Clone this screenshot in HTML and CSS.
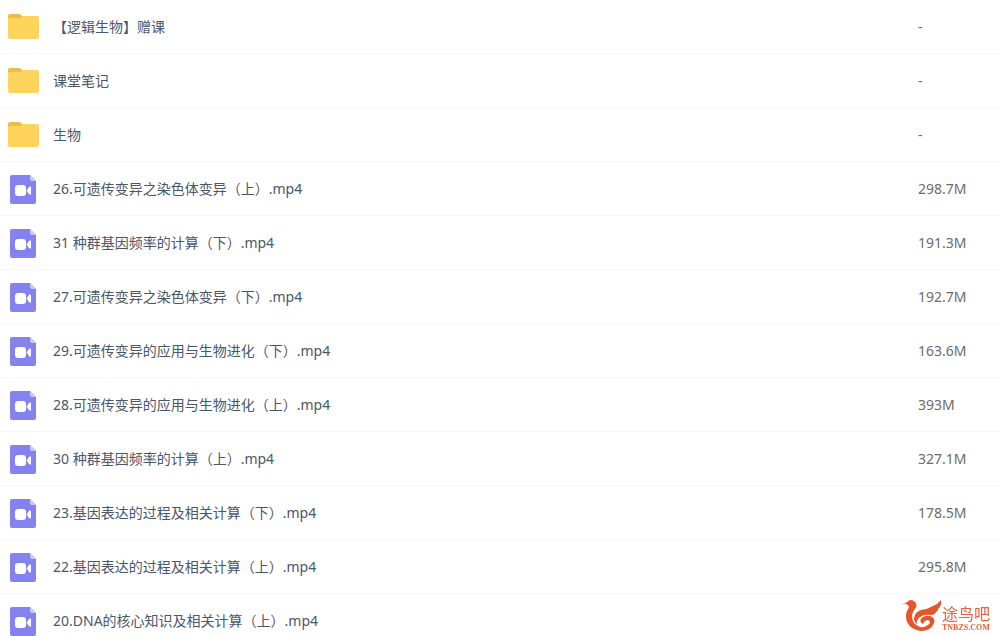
FILE: index.html
```html
<!DOCTYPE html>
<html lang="zh-CN">
<head>
    <meta charset="UTF-8">
    <meta name="viewport" content="width=device-width, initial-scale=1.0">
    <title>文件列表</title>
    <link rel="stylesheet" href="styles.css">
</head>
<body>
    <!-- shared icons -->
    <svg class="sprite" aria-hidden="true">
        <symbol id="folder" viewBox="0 0 31 26">
            <path fill="#e9bd48" d="M2 0h9q1 0 2 1l2 2v6H0V2q0-2 2-2z"/>
            <path fill="#ffd45c" d="M0 5q0-1 1-1h12l1-2h15q2 0 2 2v19q0 2-2 2H2q-2 0-2-2z"/>
        </symbol>
        <symbol id="video" viewBox="0 0 26 30">
            <path fill="#8482ee" d="M2 0h18l6 6v21q0 2-2 2H2q-2 0-2-2V2q0-2 2-2z"/>
            <path fill="#c9c8fa" d="M20 0l6 6h-4q-2 0-2-2z"/>
            <rect x="5" y="10" width="11" height="11" rx="3" fill="#fff"/>
            <path fill="#fff" d="M16.500 15.500l2.500-3.500q2-2 2 1v5q0 3-2 1z"/>
        </symbol>
    </svg>

    <table class="file-list">
        <tbody>
            <tr>
                <td class="icon"><svg class="folder-icon"><use href="#folder"/></svg></td>
                <td class="name"><a href="#">【逻辑生物】赠课</a></td>
                <td class="size">-</td>
            </tr>
            <tr>
                <td class="icon"><svg class="folder-icon"><use href="#folder"/></svg></td>
                <td class="name"><a href="#">课堂笔记</a></td>
                <td class="size">-</td>
            </tr>
            <tr>
                <td class="icon"><svg class="folder-icon"><use href="#folder"/></svg></td>
                <td class="name"><a href="#">生物</a></td>
                <td class="size">-</td>
            </tr>
            <tr>
                <td class="icon"><svg class="video-icon"><use href="#video"/></svg></td>
                <td class="name"><a href="#">26.可遗传变异之染色体变异（上）.mp4</a></td>
                <td class="size">298.7M</td>
            </tr>
            <tr>
                <td class="icon"><svg class="video-icon"><use href="#video"/></svg></td>
                <td class="name"><a href="#">31 种群基因频率的计算（下）.mp4</a></td>
                <td class="size">191.3M</td>
            </tr>
            <tr>
                <td class="icon"><svg class="video-icon"><use href="#video"/></svg></td>
                <td class="name"><a href="#">27.可遗传变异之染色体变异（下）.mp4</a></td>
                <td class="size">192.7M</td>
            </tr>
            <tr>
                <td class="icon"><svg class="video-icon"><use href="#video"/></svg></td>
                <td class="name"><a href="#">29.可遗传变异的应用与生物进化（下）.mp4</a></td>
                <td class="size">163.6M</td>
            </tr>
            <tr>
                <td class="icon"><svg class="video-icon"><use href="#video"/></svg></td>
                <td class="name"><a href="#">28.可遗传变异的应用与生物进化（上）.mp4</a></td>
                <td class="size">393M</td>
            </tr>
            <tr>
                <td class="icon"><svg class="video-icon"><use href="#video"/></svg></td>
                <td class="name"><a href="#">30 种群基因频率的计算（上）.mp4</a></td>
                <td class="size">327.1M</td>
            </tr>
            <tr>
                <td class="icon"><svg class="video-icon"><use href="#video"/></svg></td>
                <td class="name"><a href="#">23.基因表达的过程及相关计算（下）.mp4</a></td>
                <td class="size">178.5M</td>
            </tr>
            <tr>
                <td class="icon"><svg class="video-icon"><use href="#video"/></svg></td>
                <td class="name"><a href="#">22.基因表达的过程及相关计算（上）.mp4</a></td>
                <td class="size">295.8M</td>
            </tr>
            <tr>
                <td class="icon"><svg class="video-icon"><use href="#video"/></svg></td>
                <td class="name"><a href="#">20.DNA的核心知识及相关计算（上）.mp4</a></td>
                <td class="size"></td>
            </tr>
        </tbody>
    </table>

    <div class="watermark">
        <svg class="bird" viewBox="0 0 41 32" aria-hidden="true">
            <!-- head, neck and belly -->
            <path fill="#e5562d" d="M0 4Q3 5 6 2q4-4 8 0 3 3 0 7-3 3-3 7 0 8 8 11 6 1 10-4 0-3-3-3-3 1-4 4-4-2-2-5 3-4 9-3 6 2 4 7-3 8-13 8Q10 30 6 22q-2-6 0-11 3-4 1-6Q4 3 0 4z"/>
            <!-- wing -->
            <path fill="#e5562d" d="M13 18q1-6 7-8 7-1 12-4 5-2 8-6 1 6-3 9 1 1-2 3-1 3-5 3-7-1-11 2-4 3-3 7-3-2-3-6z"/>
        </svg>
        <div class="brand">
            <span class="brand-name">途鸟吧</span>
            <span class="brand-url">TNBZS.COM</span>
        </div>
    </div>
</body>
</html>
```

FILE: styles.css
```css
body {
    margin: 0;
    background-color: #fff;
    color: #4c5669;
    font-family: "Noto Sans", "Noto Sans CJK SC", sans-serif;
    font-size: 14px;
    line-height: 20px;
}
.sprite {
    position: absolute;
    width: 0;
    height: 0;
}
.file-list {
    width: 100%;
    table-layout: fixed;
    border-collapse: separate;
    border-spacing: 0;
}
.file-list td {
    height: 53px;
    padding: 0;
    border-bottom: 1px solid #f6f7f8;
    vertical-align: middle;
}
.file-list .icon {
    width: 46px;
}
.file-list .name {
    padding-left: 7px;
}
.file-list .size {
    width: 82px;
    color: #6c6c6c;
}
.name a {
    color: inherit;
    text-decoration: none;
}
.name a:hover {
    color: #09aaff;
}
.folder-icon, .video-icon {
    display: block;
    margin: 0 auto;
}
.folder-icon {
    width: 31px;
    height: 26px;
}
.video-icon {
    width: 26px;
    height: 30px;
    padding-top: 2px;
}
.watermark {
    position: fixed;
    right: 10px;
    bottom: 4px;
    display: flex;
    align-items: flex-end;
    color: #e9603a;
}
.bird {
    width: 41px;
    height: 32px;
}
.brand-name, .brand-url {
    display: block;
}
.brand-name {
    font-size: 16px;
    line-height: 20px;
}
.brand-url {
    font-family: "Liberation Serif", serif;
    font-size: 8px;
    font-weight: bold;
    line-height: 8px;
}
```
